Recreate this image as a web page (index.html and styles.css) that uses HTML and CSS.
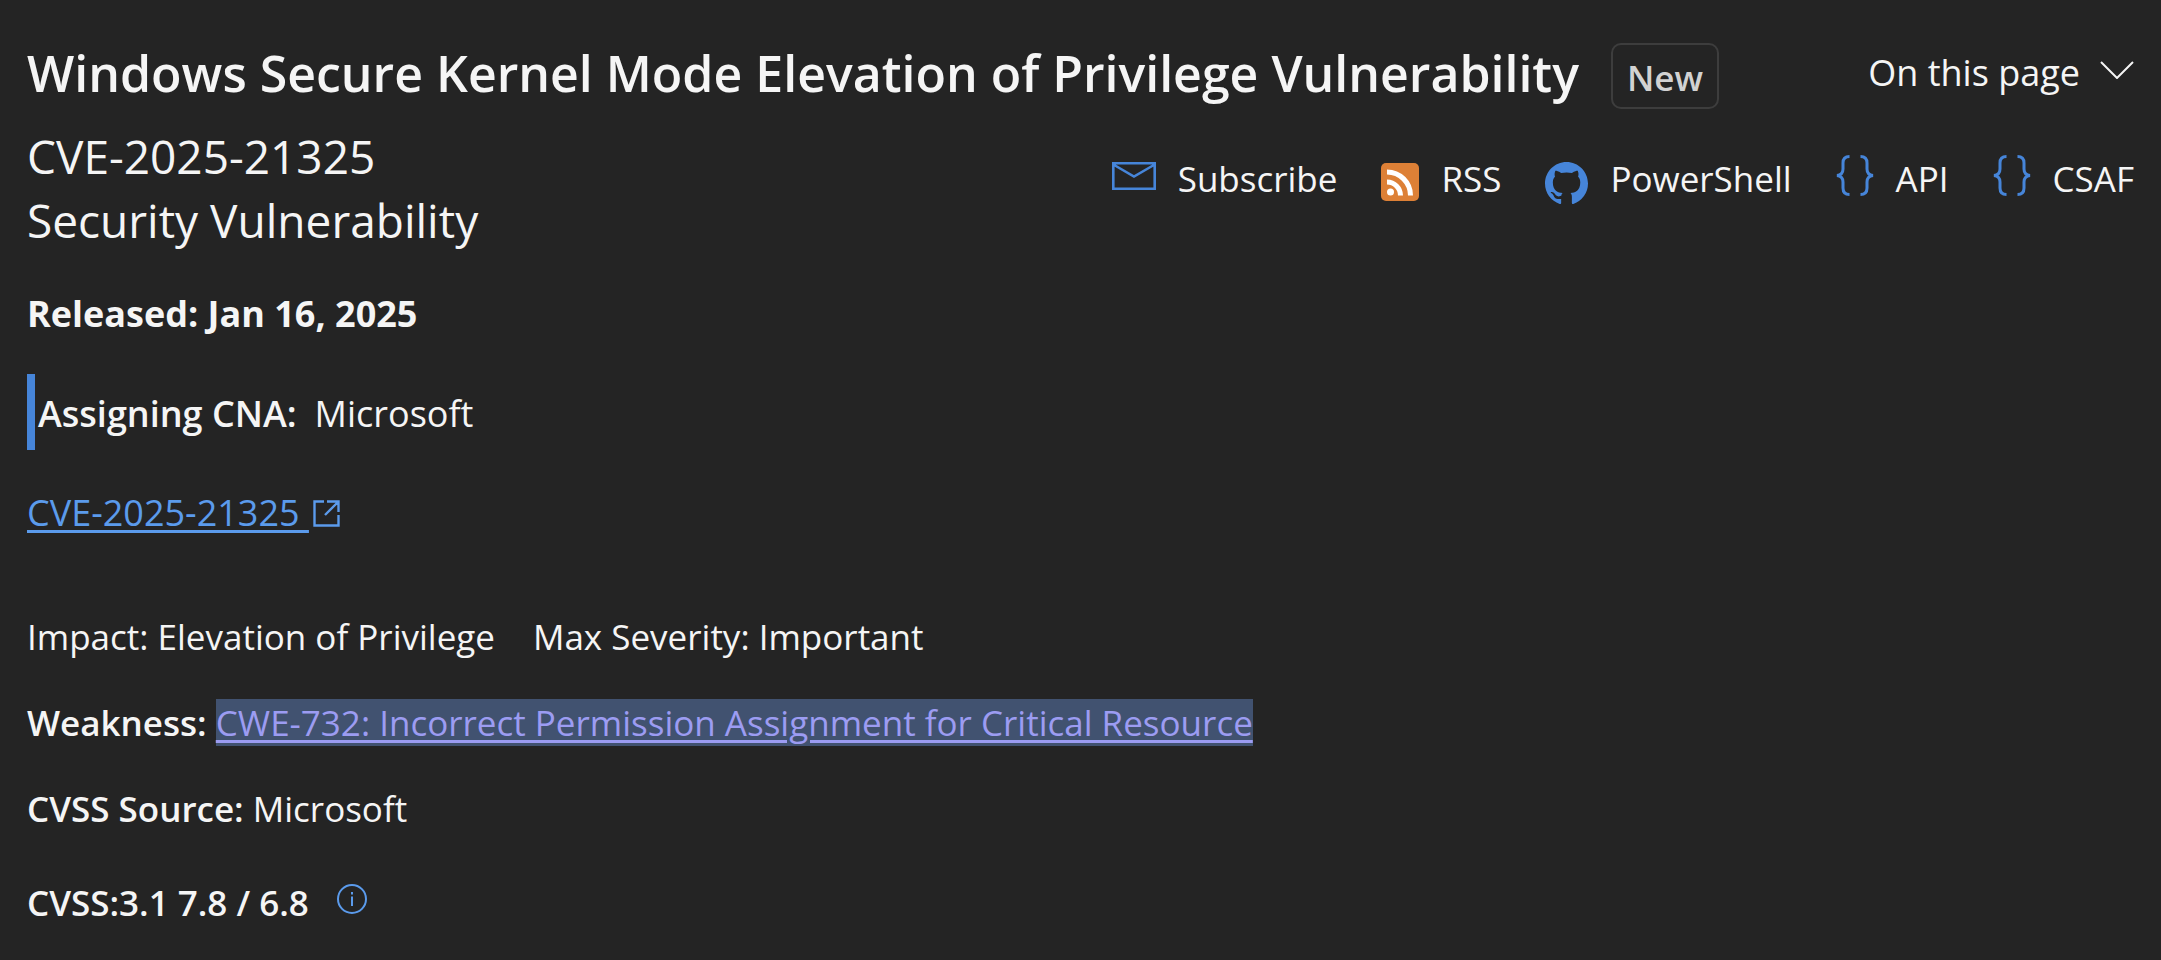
FILE: index.html
```html
<!DOCTYPE html>
<html lang="en">
<head>
  <meta charset="utf-8">
  <title>CVE-2025-21325</title>
  <link rel="stylesheet" href="styles.css">
</head>
<body>
  <main class="page">
    <header class="header">
      <div class="title-row">
        <h1 class="title">Windows Secure Kernel Mode Elevation of Privilege Vulnerability</h1>
        <span class="badge">New</span>
        <button class="on-page" type="button">
          On this page
          <svg class="chevron" width="34" height="18" viewBox="0 0 34 18" fill="none" stroke="currentColor" stroke-width="2"><path d="M1 1l16 16L33 1"/></svg>
        </button>
      </div>
      <div class="sub-row">
        <div class="subtitle">
          <div>CVE-2025-21325</div>
          <div>Security Vulnerability</div>
        </div>
        <nav class="actions">
          <a href="#subscribe">
            <svg width="44" height="46" viewBox="0 0 44 46" fill="none" stroke="#4685d9" stroke-width="2.6"><path d="M1.3 8.300h41.400v25.400H1.300zM1.300 9.500L22 21.500l20.700-12"/></svg>
            Subscribe
          </a>
          <a href="#rss">
            <svg width="38" height="46" viewBox="0 0 38 46"><rect y="8" width="38" height="38" rx="5" fill="#dd8036"/><circle cx="9.500" cy="37" r="3.500" fill="#fff"/><path d="M6 27A13.500 13.500 0 0 1 19.500 40.500M6 17A23.500 23.500 0 0 1 29.500 40.500" fill="none" stroke="#fff" stroke-width="5"/></svg>
            RSS
          </a>
          <a href="#powershell">
            <svg width="43" height="46" viewBox="0 -2.600 16 17.100" overflow="visible"><path fill="#4685d9" d="M8 0C3.580 0 0 3.580 0 8c0 3.540 2.290 6.530 5.470 7.590.4.070.55-.17.55-.38 0-.19-.010-.82-.010-1.490-2.010.37-2.530-.49-2.690-.94-.09-.23-.48-.94-.82-1.130-.28-.15-.68-.52-.010-.53.63-.010 1.080.58 1.230.82.72 1.210 1.870.87 2.330.66.070-.52.28-.87.510-1.070-1.780-.2-3.640-.89-3.640-3.950 0-.87.310-1.590.82-2.150-.08-.2-.36-1.020.08-2.120 0 0 .67-.210 2.200.82.640-.18 1.320-.27 2-.27s1.360.09 2 .27c1.530-1.040 2.200-.82 2.200-.82.440 1.100.16 1.920.08 2.120.510.56.82 1.270.82 2.150 0 3.070-1.870 3.750-3.650 3.950.29.25.54.73.54 1.480 0 1.070-.010 1.930-.010 2.200 0 .210.15.46.55.38A8.010 8.010 0 0 0 16 8c0-4.420-3.580-8-8-8z"/></svg>
            PowerShell
          </a>
          <a href="#api">
            <svg width="38" height="46" viewBox="0 0 38 46" fill="none" stroke="#4685d9" stroke-width="3"><path d="M13.500 1.500C9 1.500 7 4 7 8v6c0 4-2 6-6 6.500 4 .5 6 2.500 6 6.500v6c0 4 2 6.500 6.500 6.500M24.500 1.500C29 1.500 31 4 31 8v6c0 4 2 6 6 6.500-4 .5-6 2.500-6 6.500v6c0 4-2 6.500-6.500 6.500"/></svg>
            API
          </a>
          <a href="#csaf">
            <svg width="38" height="46" viewBox="0 0 38 46" fill="none" stroke="#4685d9" stroke-width="3"><path d="M13.500 1.500C9 1.500 7 4 7 8v6c0 4-2 6-6 6.500 4 .5 6 2.500 6 6.500v6c0 4 2 6.500 6.500 6.500M24.500 1.500C29 1.500 31 4 31 8v6c0 4 2 6 6 6.500-4 .5-6 2.500-6 6.500v6c0 4-2 6.500-6.500 6.500"/></svg>
            CSAF
          </a>
        </nav>
      </div>
    </header>

    <p class="released">Released: Jan 16, 2025</p>

    <p class="cna"><strong>Assigning CNA:</strong><span>Microsoft</span></p>

    <p class="cve"><a href="#cve" class="link">CVE-2025-21325&nbsp;</a><svg width="27" height="27" viewBox="0 0 27 27" fill="none" stroke="#5b9bec" stroke-width="2.400"><path d="M11 1.500H1.500v24h24V15M14 1.500h11.500V12M25.500 1.500L12 15"/></svg></p>

    <div class="details">
      <p class="impact"><span>Impact: Elevation of Privilege</span><span>Max Severity: Important</span></p>
      <p><strong>Weakness:</strong> <a href="#cwe" class="link visited">CWE-732: Incorrect Permission Assignment for Critical Resource</a></p>
      <p><strong>CVSS Source:</strong> Microsoft</p>
      <p class="score">
        <strong>CVSS:3.1 7.8 / 6.8</strong>
        <button class="info" type="button" aria-label="CVSS info">
          <svg width="30" height="30" viewBox="0 0 30 30" fill="none" stroke="#5b9bec" stroke-width="2"><circle cx="15" cy="15" r="14"/><path d="M15 12.500V22M15 8v2.500"/></svg>
        </button>
      </p>
    </div>
  </main>
</body>
</html>
```

FILE: styles.css
```css
* {
  box-sizing: border-box;
}
body {
  margin: 0;
  background: #242424;
  color: #f5f5f5;
  font-family: "Segoe UI", "Open Sans", sans-serif;
  font-size: 35px;
  line-height: 48px;
}
p, h1 {
  margin: 0;
}
strong {
  font-weight: 600;
}
button {
  padding: 0;
  border: 0;
  background: none;
  color: inherit;
  font: inherit;
  cursor: pointer;
}
svg {
  flex: none;
}
.page {
  padding: 22px 27px;
}
.title-row {
  display: flex;
  align-items: center;
  height: 102px;
}
.title {
  font-size: 50px;
  line-height: 68px;
  font-weight: 600;
  white-space: nowrap;
}
.badge {
  margin-left: 32px;
  margin-top: 6px;
  padding: 9px 14px 5px;
  border: 2px solid #3d3d3d;
  border-radius: 10px;
  color: #d2d2d2;
  font-weight: 600;
}
.on-page {
  display: flex;
  align-items: center;
  gap: 20px;
  margin-left: auto;
  font-size: 36px;
  white-space: nowrap;
}
.chevron {
  margin-bottom: 6px;
}
.sub-row {
  display: flex;
  justify-content: space-between;
}
.subtitle {
  font-size: 46px;
  line-height: 64px;
}
.actions {
  display: flex;
  gap: 44px;
  padding-top: 31px;
}
.actions a {
  display: flex;
  align-items: flex-start;
  gap: 22px;
  height: 48px;
  color: inherit;
  text-decoration: none;
}
.released,
.cna,
.cve {
  font-size: 36px;
}
.released {
  margin-top: 38px;
  font-weight: 700;
}
.cna {
  display: flex;
  gap: 18px;
  margin-top: 36px;
  padding: 16px 3px 12px;
  border-left: 8px solid #4685d9;
}
.cve {
  display: flex;
  align-items: center;
  gap: 4px;
  margin-top: 39px;
}
.link {
  color: #5b9bec;
  text-decoration-thickness: 3px;
  text-underline-offset: 4px;
}
.visited {
  background: #415270;
  color: #9c9cf2;
}
.details {
  display: flex;
  flex-direction: column;
  gap: 38px;
  margin-top: 76px;
}
.impact {
  display: flex;
  gap: 38px;
}
.score {
  display: flex;
  align-items: center;
  gap: 28px;
  margin-top: 8px;
}
.info {
  display: flex;
  margin-bottom: 8px;
}
```
